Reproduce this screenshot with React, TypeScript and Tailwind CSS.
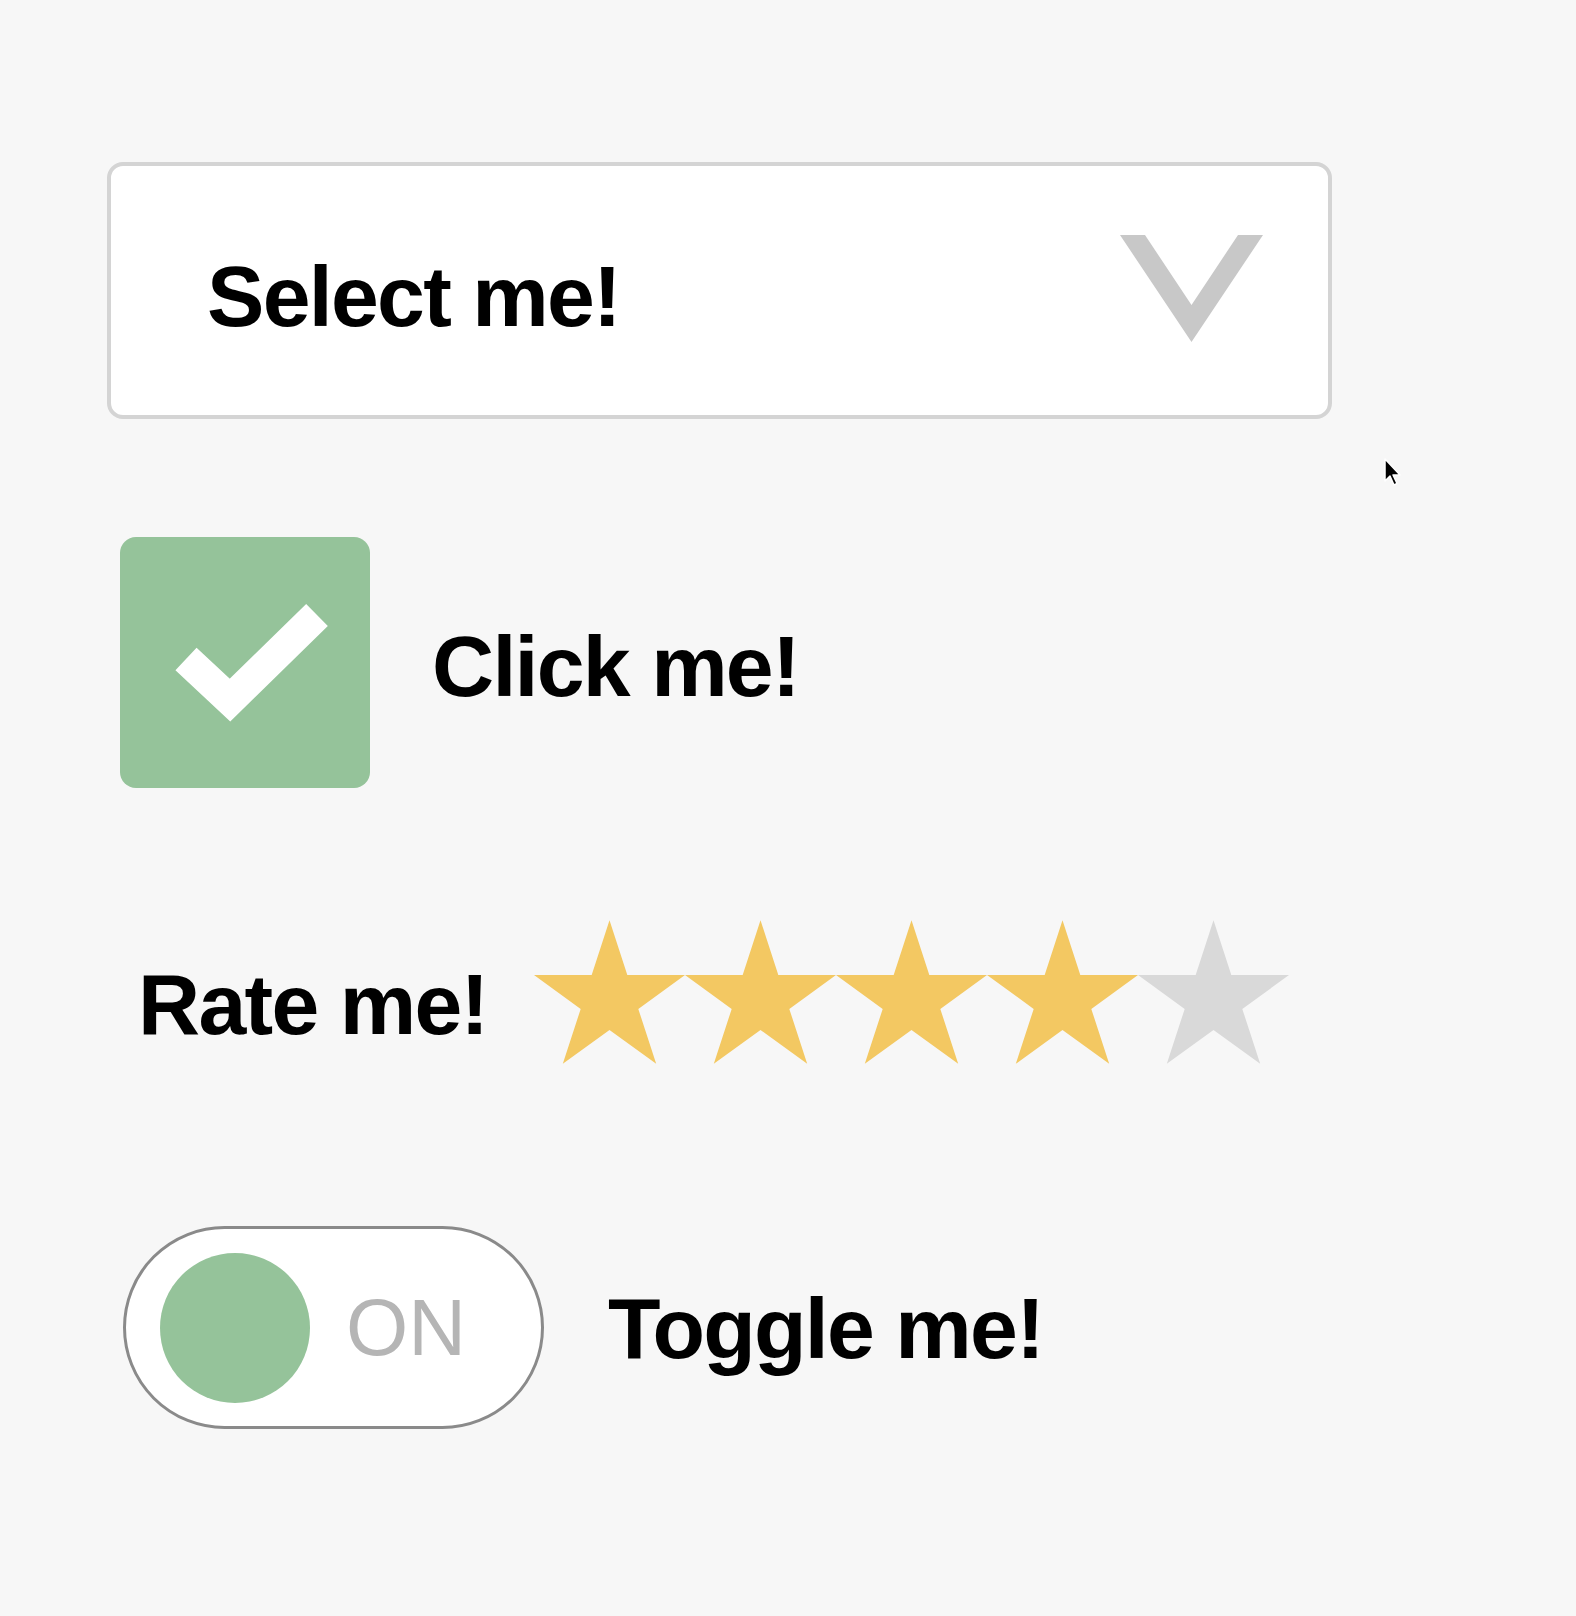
import { useState } from "react";

const FONT = "font-['Liberation_Sans',Arial,sans-serif]";

function Chevron() {
  return (
    <svg width="143" height="107" viewBox="0 0 143 107" className="shrink-0 mb-[4px]">
      <polygon points="0,0 25,0 71.5,70 118,0 143,0 71.5,107" fill="#c8c8c8" />
    </svg>
  );
}

function Star({ on }: { on: boolean }) {
  return (
    <svg width="151" height="144" viewBox="-95.1 -100 190.2 180.9" className="shrink-0">
      <polygon
        points="0,-100 22.45,-30.9 95.1,-30.9 36.3,11.8 58.8,80.9 0,38.2 -58.8,80.9 -36.3,11.8 -95.1,-30.9 -22.45,-30.9"
        fill={on ? "#f3c862" : "#d9d9d9"}
      />
    </svg>
  );
}

export default function App() {
  const [checked, setChecked] = useState(true);
  const [rating, setRating] = useState(4);
  const [toggled, setToggled] = useState(true);

  return (
    <div className={`relative min-h-screen bg-[#f7f7f7] pt-[162px] pl-[107px] ${FONT}`}>
      {/* select */}
      <button className="flex h-[257px] w-[1225px] items-center justify-between rounded-[16px] border-4 border-[#d4d4d4] bg-white pl-[96px] pr-[65px]">
        <span className="mt-[10px] text-[86px] font-bold leading-none tracking-[-0.02em] text-black">
          Select me!
        </span>
        <Chevron />
      </button>

      {/* checkbox */}
      <div className="ml-[13px] mt-[118px] flex items-center gap-[62px]">
        <button
          onClick={() => setChecked(!checked)}
          className="flex h-[251px] w-[250px] items-center justify-center rounded-[16px] bg-[#95c39a]"
        >
          {checked && (
            <svg width="250" height="251" viewBox="0 0 250 251">
              <path d="M66 122 L110 163 L197 78" fill="none" stroke="#fff" strokeWidth="31" strokeLinejoin="miter" />
            </svg>
          )}
        </button>
        <span className="mt-[7px] text-[86px] font-bold leading-none tracking-[-0.02em] text-black">
          Click me!
        </span>
      </div>

      {/* rating */}
      <div className="ml-[31px] mt-[132px] flex items-center gap-[47px]">
        <span className="mt-[24px] text-[86px] font-bold leading-none tracking-[-0.02em] text-black">
          Rate me!
        </span>
        <div className="flex">
          {[1, 2, 3, 4, 5].map((n) => (
            <button key={n} onClick={() => setRating(n)}>
              <Star on={n <= rating} />
            </button>
          ))}
        </div>
      </div>

      {/* toggle */}
      <div className="ml-[16px] mt-[162px] flex items-center gap-[64px]">
        <button
          onClick={() => setToggled(!toggled)}
          className="flex h-[203px] w-[421px] items-center gap-[36px] rounded-full border-[3px] border-[#8a8a8a] bg-white pl-[34px]"
        >
          <span className="h-[150px] w-[150px] rounded-full bg-[#95c39a]" />
          <span className="text-[80px] leading-none text-[#b5b5b5]">{toggled ? "ON" : "OFF"}</span>
        </button>
        <span className="text-[86px] font-bold leading-none tracking-[-0.02em] text-black">
          Toggle me!
        </span>
      </div>

      {/* mouse pointer */}
      <svg width="20" height="30" viewBox="0 0 20 30" className="absolute left-[1383px] top-[457px]">
        <path d="M2 2 L2 24 L7 19 L11 28 L14 26.5 L10 18 L17 18 Z" fill="#000" stroke="#fff" strokeWidth="1.5" strokeLinejoin="round" />
      </svg>
    </div>
  );
}
